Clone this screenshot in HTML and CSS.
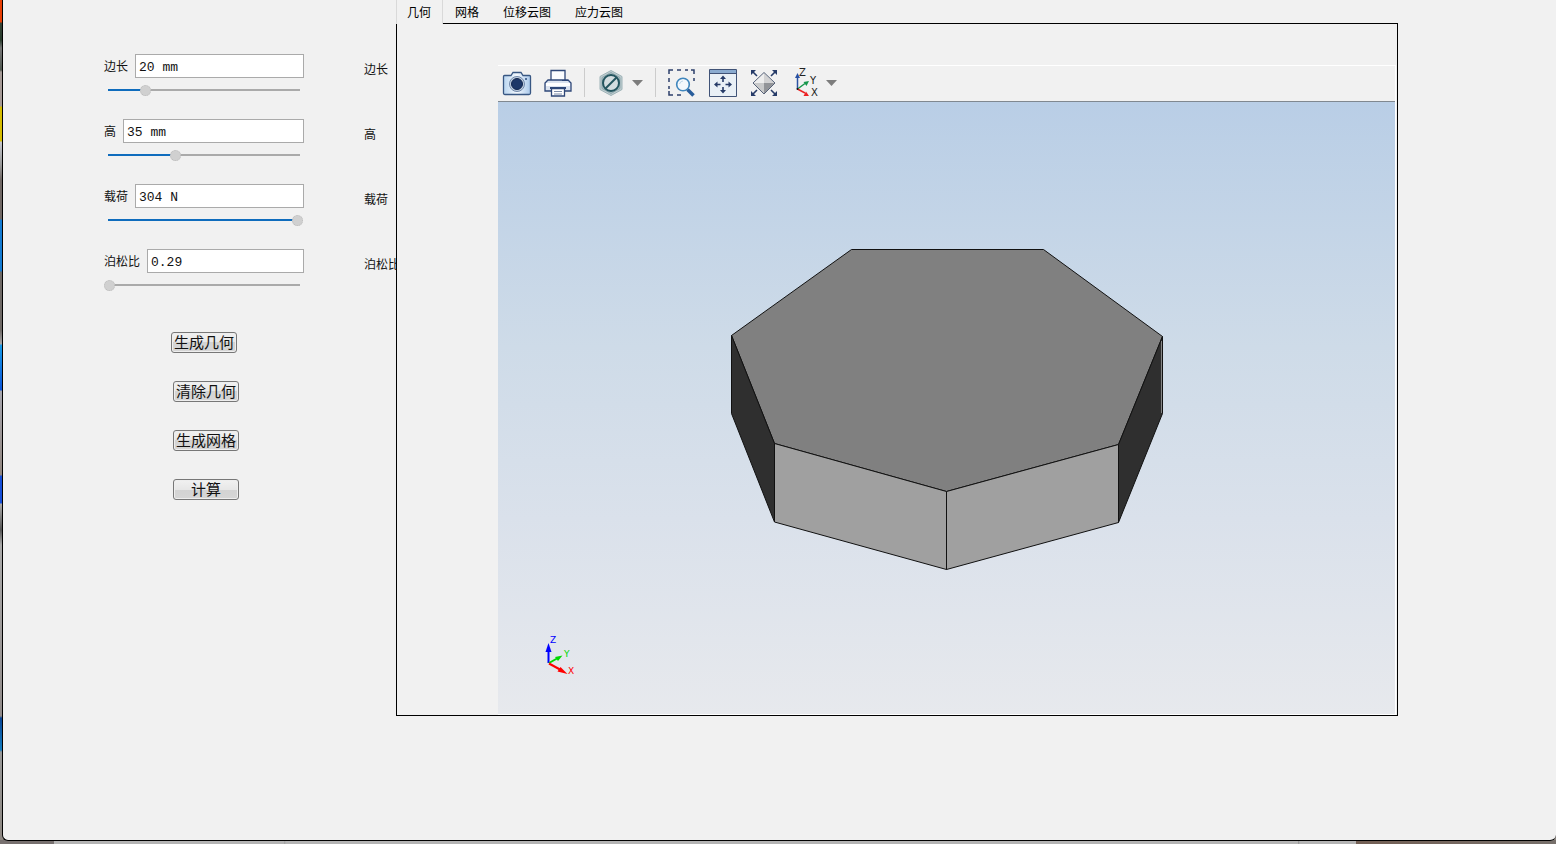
FILE: index.html
```html
<!DOCTYPE html>
<html lang="zh-CN">
<head>
<meta charset="utf-8">
<title>几何</title>
<link rel="stylesheet" href="styles.css">
</head>
<body class="desktop">
<main class="window">
  <section class="controls">
    <form class="params">
      <div class="param">
        <div class="param-row"><label for="side">边长</label><input class="field" id="side" type="text" value="20 mm"></div>
        <input class="slider" type="range" aria-label="边长" min="0" max="100" value="19" style="--fill:19%">
      </div>
      <div class="param">
        <div class="param-row"><label for="height">高</label><input class="field" id="height" type="text" value="35 mm"></div>
        <input class="slider" type="range" aria-label="高" min="0" max="100" value="35" style="--fill:35%">
      </div>
      <div class="param">
        <div class="param-row"><label for="load">载荷</label><input class="field" id="load" type="text" value="304 N"></div>
        <input class="slider" type="range" aria-label="载荷" min="0" max="100" value="100" style="--fill:96%">
      </div>
      <div class="param">
        <div class="param-row"><label for="poisson">泊松比</label><input class="field" id="poisson" type="text" value="0.29"></div>
        <input class="slider" type="range" aria-label="泊松比" min="0" max="100" value="0" style="--fill:0%">
      </div>
      <div class="actions">
        <button class="action first" type="button">生成几何</button>
        <button class="action" type="button">清除几何</button>
        <button class="action" type="button">生成网格</button>
        <button class="action" type="button">计算</button>
      </div>
    </form>
    <div class="captions">
      <span>边长</span>
      <span>高</span>
      <span>载荷</span>
      <span>泊松比</span>
    </div>
  </section>

  <section class="results">
    <div class="tabs" role="tablist">
      <button class="tab active" role="tab" aria-selected="true">几何</button>
      <button class="tab" role="tab" aria-selected="false">网格</button>
      <button class="tab" role="tab" aria-selected="false">位移云图</button>
      <button class="tab" role="tab" aria-selected="false">应力云图</button>
    </div>
    <div class="panel" role="tabpanel">
      <div class="viewer">
        <div class="toolbar" role="toolbar">
          <button class="tool" aria-label="截图">
            <svg viewBox="0 0 28 28">
              <defs><linearGradient id="cam" x2="1" y2="0"><stop offset="0" stop-color="#b9d5f0"/><stop offset=".5" stop-color="#f4f9fe"/><stop offset="1" stop-color="#a9c8ea"/></linearGradient></defs>
              <path d="M1.500 6.500H8L10 3.500H18L20 6.500H26.500Q27.500 6.500 27.500 7.500V24Q27.500 25.500 26 25.500H2Q.5 25.500 .5 24V7.500Q.5 6.500 1.500 6.500Z" fill="url(#cam)" stroke="#385783" stroke-width="1.300"/>
              <circle cx="14" cy="15" r="7.500" fill="#c3d0df" stroke="#6f87aa"/>
              <circle cx="14" cy="15" r="5.500" fill="#1d3768" stroke="#122750"/>
              <circle cx="23" cy="10" r="1" fill="#294b7e"/>
            </svg>
          </button>
          <button class="tool" aria-label="打印">
            <svg viewBox="0 0 28 28" stroke="#2e4778" stroke-width="1.300">
              <path d="M7 11V1.500H21V11" fill="#fafcff"/>
              <path d="M4 11H24L27 14V22H1V14Z" fill="#dbe3ef"/>
              <path d="M2 15.500H26" stroke="#fff" stroke-width="3"/>
              <path d="M18 11.500H25" stroke-width="1"/>
              <path d="M6 19H22" stroke-width="2"/>
              <path d="M7.500 19.500H20.500V27H7.500Z" fill="#fff"/>
              <path d="M10 22.500H18M10 25H18" stroke="#7d8ca9" stroke-width="1"/>
            </svg>
          </button>
          <span class="divider"></span>
          <button class="tool" aria-label="隐藏选定">
            <svg viewBox="0 0 28 28">
              <path d="M14 1.500L25 7.500V20.500L14 26.500L3 20.500V7.500Z" fill="#c2cfd2" stroke="#9db2b7"/>
              <path d="M14 3.500L23 8.500V19.500L14 24.500L5 19.500V8.500Z" fill="#a8bdc2" stroke="#8da7ad"/>
              <circle cx="14" cy="14" r="8" fill="#d4dde0" stroke="#24555f" stroke-width="2"/>
              <path d="M8.500 19.500L19.500 8.500" stroke="#24555f" stroke-width="2"/>
            </svg>
          </button>
          <button class="drop" aria-label="隐藏选项"><svg viewBox="0 0 11 6"><path d="M0 0H11L5.500 6Z" fill="#7d7d7d"/></svg></button>
          <span class="divider"></span>
          <button class="tool" aria-label="框选缩放">
            <svg viewBox="0 0 28 28" fill="none">
              <path d="M1 5V1H5M9 1H13M17 1H20M23 1H26V5M26 9V12M1 9V13M1 17V20M1 22V26H5M9 26H13" stroke="#2d3f6b" stroke-width="1.500"/>
              <path d="M19.500 20.500L25.500 26.500" stroke="#285d9b" stroke-width="3.500"/>
              <circle cx="15" cy="15.500" r="6.300" fill="#f3f8fc" stroke="#3f86bd" stroke-width="1.600"/>
              <path d="M11.500 15Q12.500 12 15 12" stroke="#c1d9ea"/>
            </svg>
          </button>
          <button class="tool" aria-label="缩放到窗口大小">
            <svg viewBox="0 0 28 28">
              <path d="M.5 .5H27.500V27.500H.5Z" fill="#e9f0f6" stroke="#405377"/>
              <path d="M1 1H27V4H1Z" fill="#8aabd0"/><path d="M1 4.500H27" stroke="#405377"/>
              <path d="M14 8V13M14 18V23M7 15.500H11.500M16.500 15.500H21" stroke="#263b68" stroke-width="1.600"/>
              <path d="M14 6.500L17 10H11ZM14 24.500L17 21H11ZM5 15.500L8.500 12.500V18.500ZM23 15.500L19.500 12.500V18.500Z" fill="#263b68"/>
            </svg>
          </button>
          <button class="tool" aria-label="缩放到选定对象">
            <svg viewBox="0 0 28 28">
              <path d="M14 4L24.500 14H3.500Z" fill="#eee"/><path d="M14 4L24.500 14H14Z" fill="#d2d2d3"/>
              <path d="M3.500 14H14V25Z" fill="#c8c9ca"/><path d="M14 14H24.500L14 25Z" fill="#929498"/>
              <path d="M14 3.500L25 14L14 25L3 14Z" fill="none" stroke="#566278"/>
              <path d="M2 2L7 7M26 2L21 7M2 26L7 21M26 26L21 21" stroke="#263b68" stroke-width="1.600"/>
              <path d="M1 1H6L1 6ZM27 1H22L27 6ZM1 27H6L1 22ZM27 27H22L27 22Z" fill="#263b68"/>
            </svg>
          </button>
          <button class="tool" aria-label="默认视图">
            <svg viewBox="0 0 28 28">
              <path d="M6.500 20V7" stroke="#2951a3" stroke-width="1.500"/><path d="M6.500 4L9 9H4Z" fill="#2951a3"/>
              <path d="M6.500 20L14 14.500" stroke="#16964b" stroke-width="1.500"/><path d="M18 12L15.500 17L12.500 13Z" fill="#16964b"/>
              <path d="M6.500 20L14 24" stroke="#ec2224" stroke-width="1.500"/><path d="M18 27H12.500L15 22.500Z" fill="#ec2224"/>
              <circle cx="6.500" cy="20" r="1" fill="#111"/>
              <g class="icon-letter"><text x="8" y="7">Z</text><text x="19" y="15">Y</text><text x="20" y="27">X</text></g>
            </svg>
          </button>
          <button class="drop" aria-label="视图选项"><svg viewBox="0 0 11 6"><path d="M0 0H11L5.500 6Z" fill="#7d7d7d"/></svg></button>
        </div>
        <svg class="scene" viewBox="498 102 897 612" role="img" aria-label="七棱柱几何">
          <g stroke="#111" stroke-width="1" stroke-linejoin="round">
            <path d="M851.500 249.500H1043.500L1162.500 336.500L1118.500 444.500L946.500 491.500L774.500 443.500L731.500 335.500Z" fill="#808080"/>
            <path d="M731.500 335.500L774.500 443.500V522L731.500 413.500Z" fill="#2f2f2f"/>
            <path d="M1162.500 336.500L1118.500 444.500V522.500L1162.500 413.500Z" fill="#2f2f2f"/>
            <path d="M774.500 443.500L946.500 491.500V569.500L774.500 522Z" fill="#a0a0a0"/>
            <path d="M1118.500 444.500L946.500 491.500V569.500L1118.500 522.500Z" fill="#a0a0a0"/>
          </g>
          <path d="M1161.500 341V413" stroke="#858585"/>
          <path d="M548.500 663V650" stroke="#00f" stroke-width="2"/><path d="M548.500 643L551.500 652H545.500Z" fill="#00f"/>
          <path d="M549 663L557 658.500" stroke="#00d800" stroke-width="2"/><path d="M562.500 655.500L558 661L555 657Z" fill="#00d800"/>
          <path d="M549 663.500L560 669.500" stroke="#f00" stroke-width="2"/><path d="M567.500 674L557.500 671.500L560.500 667Z" fill="#f00"/>
          <g class="axis-letter"><text x="550" y="643" fill="#00f">Z</text><text x="564" y="657" fill="#00d800">Y</text><text x="568" y="674" fill="#f00">X</text></g>
        </svg>
      </div>
    </div>
  </section>
</main>
</body>
</html>
```

FILE: styles.css
```css
* { box-sizing: border-box; }

.desktop {
  display: flex;
  min-height: 100vh;
  margin: 0;
  padding: 0 0 3px 2px;
  font: 12px/16px "Liberation Sans", "Noto Sans CJK SC", sans-serif;
  color: #111;
  background:
    linear-gradient(90deg, #77706f 54px, #b4b4b4 54px, #b4b4b4 284px, #a0a0a0 284px, #b4b4b4 286px, #b4b4b4 1298px, #909090 1298px, #b4b4b4 1300px, #b4b4b4 1356px, #735f54 1356px, #77706b) bottom / 100% 4px no-repeat,
    linear-gradient(#e83f05 22px, #374537 23px, #293c2c 40px, #777 48px, #515951 70px, #a69b97 72px, #a69b97 106px, #d6bd00 107px, #d6bd00 141px, #c5c7cc 142px, #999 165px, #706865 180px, #706865 219px, #147bd2 220px, #147bd2 271px, #6e6966 272px, #6e6966 330px, #a7a7aa 344px, #169ae8 345px, #0c55d8 390px, #a7a7af 391px, #918680 475px, #164fd8 476px, #164fd8 503px, #aaa 504px, #555 530px, #aaa 545px, #918b8a 716px, #0a4696 718px, #147dc0 750px, #999 752px, #8c8680);
}

.window {
  display: flex;
  flex: 1;
  min-width: 0;
  background: #f1f1f1;
  border-left: 1px solid #000;
  border-bottom: 1px solid #000;
  border-radius: 0 0 6px 6px;
}

.controls {
  display: flex;
  flex: none;
  gap: 60px;
  width: 393px;
  padding: 54px 0 0 101px;
}

.params { width: 200px; flex: none; }
.param { margin-bottom: 17px; }
.param-row { display: flex; align-items: center; gap: 7px; }
.param-row label { flex: none; padding-top: 2px; }

.field {
  flex: 1;
  min-width: 0;
  height: 24px;
  padding: 2px 3px 0;
  border: 1px solid #aaa;
  border-radius: 0;
  background: #fff;
  color: #111;
  font: 13px/16px "Liberation Mono", monospace;
}

.slider {
  display: block;
  width: 199px;
  height: 24px;
  margin: 0;
  appearance: none;
  background:
    linear-gradient(#0f6cbd, #0f6cbd) 4px 11px / var(--fill) 2px no-repeat,
    linear-gradient(#aaa, #aaa) 4px 11px / calc(100% - 7px) 2px no-repeat;
}

.slider::-webkit-slider-thumb {
  appearance: none;
  width: 11px;
  height: 11px;
  border: 1px dotted #bbb;
  border-radius: 50%;
  background: #d0d0d0;
}

.actions {
  display: flex;
  flex-direction: column;
  align-items: center;
  gap: 28px;
  padding: 18px 0 0 4px;
}

.action {
  width: 66px;
  height: 21px;
  padding: 0;
  border: 1px solid #777;
  border-radius: 3px;
  background: linear-gradient(#f1f1f1, #e7e7e7 50%, #d3d3d3 50%, #d6d6d6);
  box-shadow: inset 0 0 0 1px #eee;
  color: #111;
  font: 15px/18px "Liberation Sans", "Noto Sans CJK SC", sans-serif;
  white-space: nowrap;
}

.action.first { margin-right: 4px; }

.captions {
  display: flex;
  flex: 1;
  flex-direction: column;
  gap: 49px;
  min-width: 0;
  padding-top: 8px;
  overflow: hidden;
  white-space: nowrap;
}

.results {
  display: flex;
  flex: 1;
  flex-direction: column;
  min-width: 0;
  margin: 0 158px 124px 0;
}

.tabs { display: flex; height: 23px; }

.tab {
  height: 23px;
  padding: 2px 12px 0;
  border: 0;
  background: none;
  color: #000;
  font: 12px/16px "Liberation Sans", "Noto Sans CJK SC", sans-serif;
}

.tab.active {
  z-index: 1;
  height: 24px;
  padding: 2px 11px 1px 10px;
  border: solid #d9d9d9;
  border-width: 0 1px;
  background: #f1f1f1;
}

.panel {
  display: flex;
  flex: 1;
  padding: 41px 1px 0 101px;
  border: 1px solid #000;
}

.viewer {
  display: flex;
  flex: 1;
  flex-direction: column;
  min-width: 0;
  border: solid #fff;
  border-width: 1px 1px 1px 0;
}

.toolbar {
  display: flex;
  align-items: center;
  height: 36px;
  padding: 0 0 2px 5px;
  border-bottom: 1px solid #808890;
}

.tool, .drop {
  flex: none;
  padding: 0;
  border: 0;
  background: none;
}

.tool { width: 28px; height: 28px; }
.tool + .tool { margin-left: 13px; }
.drop { width: 11px; height: 6px; margin-left: 7px; }
.tool svg, .drop svg { display: block; width: 100%; height: 100%; overflow: visible; }

.divider {
  width: 1px;
  height: 29px;
  margin: 0 12px;
  background: #ccc;
}

.icon-letter { font: 10px "DejaVu Sans", sans-serif; fill: #222; }
.axis-letter { font: 9px "DejaVu Sans", sans-serif; }

.scene {
  flex: 1;
  width: 100%;
  min-height: 0;
  background: linear-gradient(#b9cee6, #cedbe8 40%, #dae1eb 68%, #e7e9ed);
}
```
